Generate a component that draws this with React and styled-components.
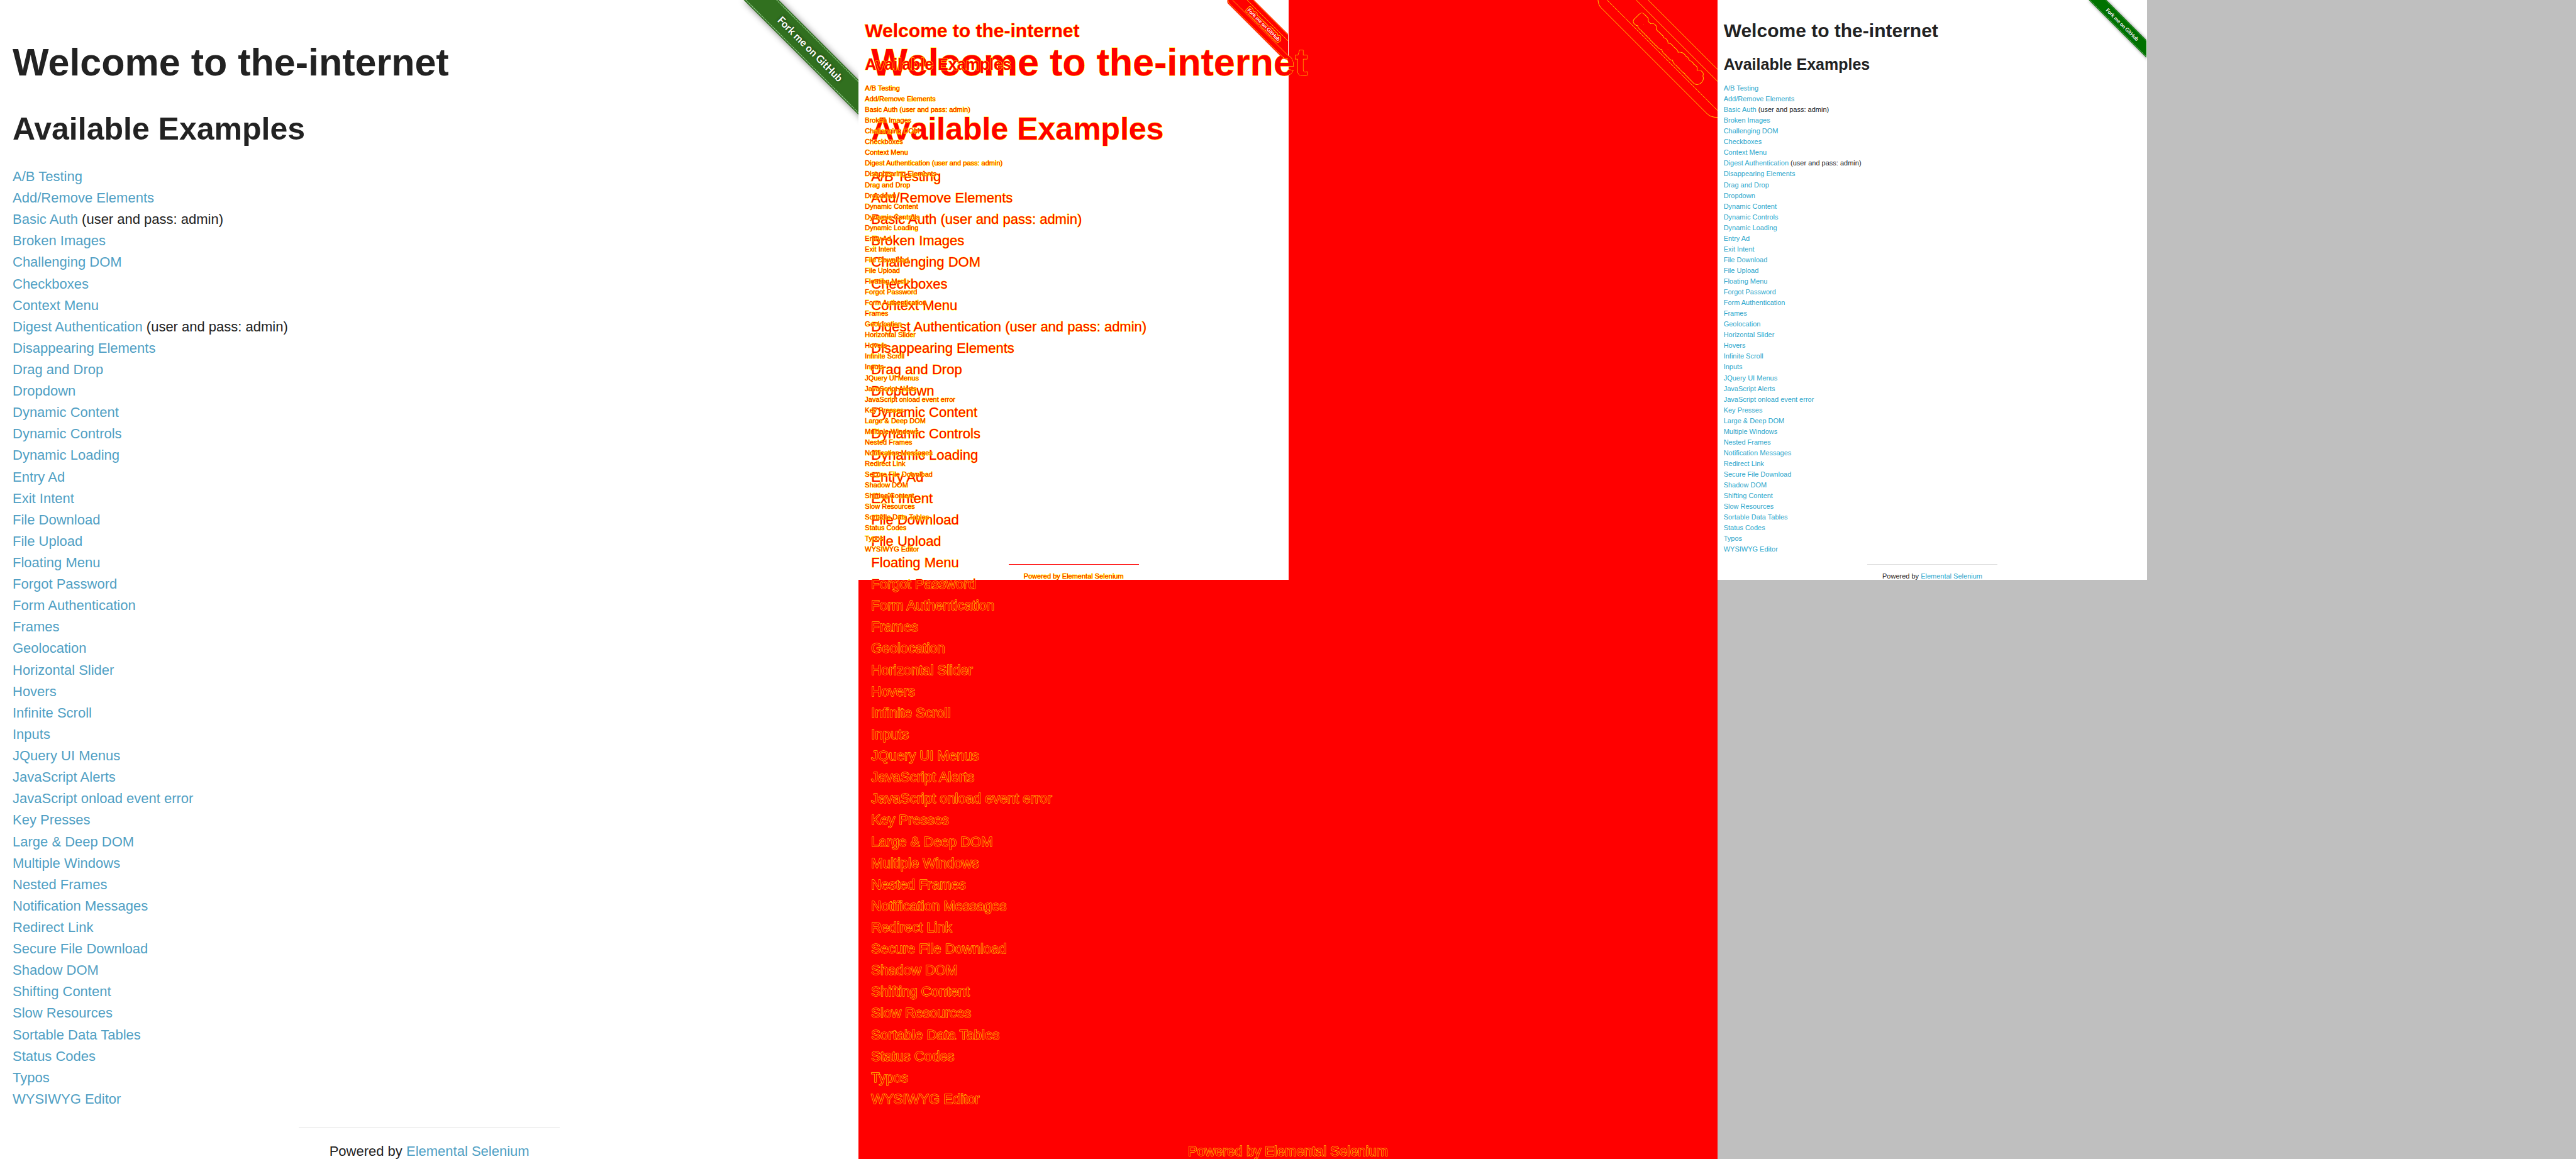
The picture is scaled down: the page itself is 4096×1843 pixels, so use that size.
import React from "react";
import styled, { createGlobalStyle, css, ThemeProvider } from "styled-components";

const GlobalStyle = createGlobalStyle`
  *, *::before, *::after { box-sizing: border-box; }
  body {
    margin: 0;
    background: #bfbfbf;
    font-family: "Liberation Sans", Arial, Helvetica, sans-serif;
  }
`;

const large = {
  pad: 20, top: 57,
  h1: 61, h1Line: 84, h1Gap: 29,
  h2: 50, h2Line: 70, h2Gap: 24,
  text: 22, row: 34,
  ruleTop: 28, ruleGap: 25, footLine: 24, footWidth: 415,
  ribbonSize: 203, edge: 0,
};

const small = {
  pad: 10, top: 28,
  h1: 30, h1Line: 42, h1Gap: 15,
  h2: 25, h2Line: 35, h2Gap: 12,
  text: 11, row: 17,
  ruleTop: 14, ruleGap: 12, footLine: 12, footWidth: 207,
  ribbonSize: 102, edge: 1,
};

const mac = { ink: "#222222", body: "#222222", link: "#509fc4", rule: "#dddddd", ribbon: "#31701f" };
const windows = { ink: "#222222", body: "#222222", link: "#2ba6cb", rule: "#dddddd", ribbon: "#007200" };
const changed = { ink: "#ff0000", body: "#ff0000", link: "#ff0000", rule: "#ff0000", ribbon: "#ff0000", diff: true };

const Comparison = styled.main`
  display: grid;
  grid-template-columns: repeat(3, minmax(0, 1fr));
  min-height: 100vh;
  overflow: hidden;
`;

const Pane = styled.section`
  display: grid;
  grid-template: minmax(0, 1fr) / minmax(0, 1fr);
  background: ${(p) => p.$fill};
`;

const halfSize = css`
  width: calc(50% + 1px);
  height: 50%;
`;

const Sheet = styled.div`
  grid-area: 1 / 1;
  background: #ffffff;
  ${halfSize}
`;

const PageBox = styled.article`
  grid-area: 1 / 1;
  position: relative;
  display: flex;
  flex-direction: column;
  overflow: hidden;
  padding: ${(p) => p.theme.top}px ${(p) => p.theme.pad}px 0;
  color: ${(p) => p.theme.body};
  background: ${(p) => (p.theme.diff ? "transparent" : "#ffffff")};
  font-size: ${(p) => p.theme.text}px;
  line-height: ${(p) => p.theme.row}px;
  ${(p) => p.$half && halfSize}
  ${(p) =>
    p.theme.diff &&
    css`
      -webkit-text-stroke: 1px #ffff00;
      paint-order: stroke fill;
    `}
`;

const Title = styled.h1`
  margin: 0 0 ${(p) => p.theme.h1Gap}px;
  color: ${(p) => p.theme.ink};
  font-size: ${(p) => p.theme.h1}px;
  line-height: ${(p) => p.theme.h1Line}px;
  white-space: nowrap;
`;

const Subtitle = styled.h2`
  margin: 0 0 ${(p) => p.theme.h2Gap}px;
  color: ${(p) => p.theme.ink};
  font-size: ${(p) => p.theme.h2}px;
  line-height: ${(p) => p.theme.h2Line}px;
`;

const Examples = styled.ul`
  flex: 1;
  display: grid;
  grid-auto-rows: 1fr;
  margin: 0;
  padding: 0;
  list-style: none;
`;

const Example = styled.li`
  white-space: nowrap;
`;

const Link = styled.a`
  color: ${(p) => p.theme.link};
  text-decoration: none;
`;

const Footer = styled.footer`
  align-self: center;
  width: ${(p) => p.theme.footWidth}px;
  margin-top: ${(p) => p.theme.ruleTop}px;
  padding-top: ${(p) => p.theme.ruleGap}px;
  border-top: 1px solid ${(p) => p.theme.rule};
  line-height: ${(p) => p.theme.footLine}px;
  text-align: center;
`;

const RibbonLink = styled.a`
  position: absolute;
  top: 0;
  right: ${(p) => p.theme.edge}px;
  -webkit-text-stroke: 0;
`;

const RibbonArt = styled.svg`
  display: block;
  width: ${(p) => p.theme.ribbonSize}px;
  height: ${(p) => p.theme.ribbonSize}px;
`;

const RibbonText = styled.text`
  font-family: Lato, "Open Sans", sans-serif;
  font-size: 12px;
  font-weight: 700;
  text-anchor: middle;
`;

const label = { x: 0, y: 4, transform: "translate(92.5 57.5) rotate(45)" };

function Ribbon({ id, color }) {
  return (
    <RibbonArt viewBox="0 0 149 149">
      <defs>
        <filter id={id} x="-20%" y="-20%" width="140%" height="140%">
          <feGaussianBlur stdDeviation="4" />
        </filter>
        <filter id={`${id}-text`} x="-20%" y="-50%" width="140%" height="200%">
          <feGaussianBlur stdDeviation="1.5" />
        </filter>
      </defs>
      <path d="M15 0L164 149V108L56 0Z" fill="#000" opacity="0.5" filter={`url(#${id})`} />
      <path d="M15 0L149 134V93L56 0Z" fill={color} />
      <path d="M17.5 0L149 131.5M53.5 0L149 95.5" stroke="#8fc48a" strokeWidth="0.9" strokeDasharray="2 0.6" />
      <RibbonText {...label} fill="#000" opacity="0.5" filter={`url(#${id}-text)`} aria-hidden="true">
        Fork me on GitHub
      </RibbonText>
      <RibbonText {...label} fill="#fff">Fork me on GitHub</RibbonText>
    </RibbonArt>
  );
}

function ChangedRibbon({ half }) {
  return (
    <RibbonArt viewBox="0 0 149 149">
      <path d="M8 0V5Q9 8 11 10L133 132Q139 138 144 138H149V79L70 0Z" fill="#f00" />
      <g fill="none" stroke="#ff0" strokeWidth={half ? 1 : 0.6}>
        <path d="M9.500 0Q10 6 13 9L137 133Q141 137 149 137" />
        <path d="M20 0L149 129" strokeDasharray="4 0.4" />
        <path d="M54 0L149 95M68 0L149 81" />
      </g>
      <RibbonText {...label} fill="#ff0" stroke="#ff0" strokeWidth="8" strokeLinejoin="round">
        Fork me on GitHub
      </RibbonText>
      <RibbonText
        {...label}
        fill={half ? "#fff" : "#f00"}
        stroke="#f00"
        strokeWidth={half ? 6 : 7}
        strokeLinejoin="round"
        paintOrder="stroke"
        aria-hidden="true"
      >
        Fork me on GitHub
      </RibbonText>
    </RibbonArt>
  );
}

const examples = [
  ["A/B Testing"], ["Add/Remove Elements"], ["Basic Auth", "(user and pass: admin)"],
  ["Broken Images"], ["Challenging DOM"], ["Checkboxes"], ["Context Menu"],
  ["Digest Authentication", "(user and pass: admin)"], ["Disappearing Elements"],
  ["Drag and Drop"], ["Dropdown"], ["Dynamic Content"], ["Dynamic Controls"],
  ["Dynamic Loading"], ["Entry Ad"], ["Exit Intent"], ["File Download"], ["File Upload"],
  ["Floating Menu"], ["Forgot Password"], ["Form Authentication"], ["Frames"],
  ["Geolocation"], ["Horizontal Slider"], ["Hovers"], ["Infinite Scroll"], ["Inputs"],
  ["JQuery UI Menus"], ["JavaScript Alerts"], ["JavaScript onload event error"],
  ["Key Presses"], ["Large & Deep DOM"], ["Multiple Windows"], ["Nested Frames"],
  ["Notification Messages"], ["Redirect Link"], ["Secure File Download"], ["Shadow DOM"],
  ["Shifting Content"], ["Slow Resources"], ["Sortable Data Tables"], ["Status Codes"],
  ["Typos"], ["WYSIWYG Editor"],
];

function WelcomePage({ id, half, palette }) {
  return (
    <ThemeProvider theme={{ ...(half ? small : large), ...palette }}>
      <PageBox $half={half}>
        <Title>Welcome to the-internet</Title>
        <Subtitle>Available Examples</Subtitle>
        <Examples>
          {examples.map(([name, note]) => (
            <Example key={name}>
              <Link href="#">{name}</Link>
              {note && ` ${note}`}
            </Example>
          ))}
        </Examples>
        <Footer>
          Powered by <Link href="#">Elemental Selenium</Link>
        </Footer>
        <RibbonLink href="#" aria-label="Fork me on GitHub">
          {palette.diff ? <ChangedRibbon half={half} /> : <Ribbon id={id} color={palette.ribbon} />}
        </RibbonLink>
      </PageBox>
    </ThemeProvider>
  );
}

export default function App() {
  return (
    <>
      <GlobalStyle />
      <Comparison>
        <Pane $fill="#ffffff">
          <WelcomePage id="mac" palette={mac} />
        </Pane>
        <Pane $fill="#ff0000">
          <Sheet />
          <WelcomePage id="diff-large" palette={changed} />
          <WelcomePage id="diff-small" half palette={changed} />
        </Pane>
        <Pane $fill="#bfbfbf">
          <WelcomePage id="windows" half palette={windows} />
        </Pane>
      </Comparison>
    </>
  );
}
